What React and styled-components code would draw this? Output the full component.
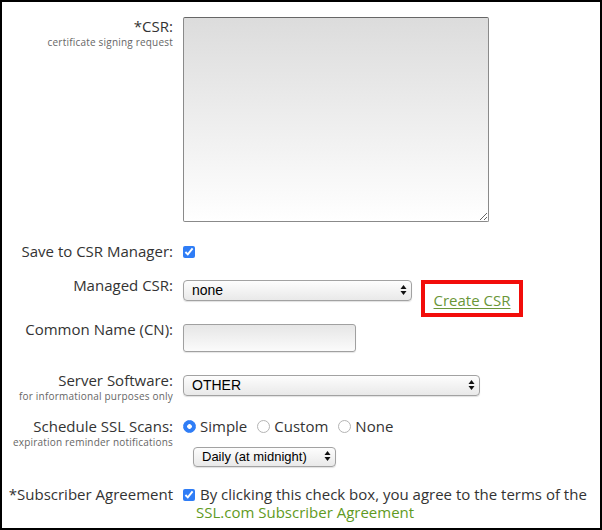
import styled, {createGlobalStyle} from 'styled-components';

const GlobalStyle = createGlobalStyle`
	body {
		margin: 0;
		background: #fff;
	}
`;

const Frame = styled.form`
	box-sizing: border-box;
	width: 602px;
	height: 530px;
	border: 2px solid #000;
	padding-top: 15px;
	font-family: "Open Sans", "DejaVu Sans", sans-serif;
	font-size: 15px;
	color: #333;
`;

const Row = styled.div`
	display: grid;
	grid-template-columns: 171px 1fr;
	column-gap: 10px;
	align-items: start;
	margin-top: ${p => p.$gap || 0}px;
`;

const Label = styled.label`
	display: flex;
	flex-direction: column;
	align-items: flex-end;
	text-align: right;
	line-height: 19px;
	white-space: nowrap;
`;

const Hint = styled.small`
	font-size: 10px;
	line-height: 12px;
	color: #666;
	letter-spacing: 0.2px;
`;

const Controls = styled.div`
	display: flex;
	align-items: flex-start;
	gap: ${p => p.$gap || 0}px;
`;

const Stack = styled.div`
	display: flex;
	flex-direction: column;
`;

const TextArea = styled.textarea`
	display: block;
	box-sizing: border-box;
	width: 306px;
	height: 205px;
	border: 1px solid #8a8a8a;
	border-top-color: #666;
	border-radius: 2px;
	background: linear-gradient(#dcdcdc, #fff);
`;

const Check = styled.input.attrs({type: 'checkbox'})`
	width: 12px;
	height: 12px;
	margin: ${p => p.$top || 0}px 0 0 0;
	accent-color: #2f7df6;
	flex-shrink: 0;
`;

const SelectWrap = styled.div`
	position: relative;
	width: ${p => p.$width}px;
	margin-top: ${p => p.$top || 0}px;
	margin-left: ${p => p.$left || 0}px;
`;

const Select = styled.select`
	appearance: none;
	box-sizing: border-box;
	width: 100%;
	height: ${p => p.$height || 21}px;
	padding: 0 20px 0 8px;
	border: 1px solid #a2a2a2;
	border-radius: 4px;
	background: linear-gradient(#fdfdfd, #e9e9e9);
	box-shadow: 0 1px 1px rgba(0, 0, 0, 0.12);
	font-family: "Liberation Sans", Arial, sans-serif;
	font-size: ${p => p.$size || 14}px;
	color: #000;
`;

const Arrows = styled.svg`
	position: absolute;
	right: 5px;
	top: 50%;
	transform: translateY(-50%);
	pointer-events: none;
`;

const TextInput = styled.input`
	box-sizing: border-box;
	width: 173px;
	height: 28px;
	margin-top: 4px;
	border: 1px solid #a0a0a0;
	border-radius: 3px;
	background: linear-gradient(#e6e6e6, #fbfbfb);
	box-shadow: 0 1px 1px rgba(0, 0, 0, 0.1);
`;

const Highlight = styled.div`
	box-sizing: border-box;
	width: 102px;
	height: 37px;
	margin-top: 4px;
	border: 4px solid #f20d0a;
	display: flex;
	align-items: center;
	justify-content: center;
	padding-top: 3px;
`;

const Link = styled.a`
	color: ${p => p.$dark ? '#6a9638' : '#5f9a23'};
	text-decoration: ${p => p.$underline ? 'underline' : 'none'};
	text-underline-offset: 2px;
	cursor: pointer;
`;

const RadioRow = styled.div`
	display: flex;
	align-items: center;
	height: 19px;
	gap: 10px;
`;

const RadioLabel = styled.label`
	display: flex;
	align-items: center;
	gap: 4px;
	line-height: 19px;
`;

const Radio = styled.input.attrs({type: 'radio'})`
	appearance: none;
	width: 13px;
	height: 13px;
	margin: 0;
	border-radius: 50%;
	border: 1px solid #b4b4b4;
	background: #fff;
	box-sizing: border-box;

	&:checked {
		border-color: #2f7df6;
		background: radial-gradient(circle, #fff 0 2px, #2f7df6 2.6px);
	}
`;

const Agreement = styled.span`
	margin-left: 1px;
	line-height: 18px;
	text-indent: 4px;
	white-space: nowrap;
`;

const SelectArrows = () => (
	<Arrows width='7' height='11' viewBox='0 0 7 11'>
		<path d='M3.5 0.5 L6.5 4.5 L0.5 4.5 Z' fill='#111' />
		<path d='M3.5 10.5 L6.5 6.5 L0.5 6.5 Z' fill='#111' />
	</Arrows>
);

const App = () => {
	return (
		<>
			<GlobalStyle />
			<Frame onSubmit={e => e.preventDefault()}>
				<Row>
					<Label>
						*CSR:
						<Hint>certificate signing request</Hint>
					</Label>
					<TextArea />
				</Row>

				<Row $gap={20}>
					<Label>Save to CSR Manager:</Label>
					<Controls>
						<Check $top={4} defaultChecked />
					</Controls>
				</Row>

				<Row $gap={15}>
					<Label>Managed CSR:</Label>
					<Controls $gap={9}>
						<SelectWrap $width={229} $top={3}>
							<Select defaultValue='none'>
								<option value='none'>none</option>
							</Select>
							<SelectArrows />
						</SelectWrap>
						<Highlight>
							<Link $dark $underline>Create CSR</Link>
						</Highlight>
					</Controls>
				</Row>

				<Row $gap={3}>
					<Label>Common Name (CN):</Label>
					<TextInput type='text' />
				</Row>

				<Row $gap={19}>
					<Label>
						Server Software:
						<Hint>for informational purposes only</Hint>
					</Label>
					<SelectWrap $width={297} $top={3}>
						<Select defaultValue='other'>
							<option value='other'>OTHER</option>
						</Select>
						<SelectArrows />
					</SelectWrap>
				</Row>

				<Row $gap={15}>
					<Label>
						Schedule SSL Scans:
						<Hint>expiration reminder notifications</Hint>
					</Label>
					<Stack>
						<RadioRow>
							<RadioLabel><Radio name='scan' defaultChecked />Simple</RadioLabel>
							<RadioLabel><Radio name='scan' />Custom</RadioLabel>
							<RadioLabel><Radio name='scan' />None</RadioLabel>
						</RadioRow>
						<SelectWrap $width={143} $top={9} $left={10}>
							<Select $height={20} $size={13} defaultValue='daily'>
								<option value='daily'>Daily (at midnight)</option>
							</Select>
							<SelectArrows />
						</SelectWrap>
					</Stack>
				</Row>

				<Row $gap={18}>
					<Label>*Subscriber Agreement</Label>
					<Controls>
						<Check $top={4} defaultChecked />
						<Agreement>
							By clicking this check box, you agree to the terms of the
							<br />
							<Link>SSL.com Subscriber Agreement</Link>
						</Agreement>
					</Controls>
				</Row>
			</Frame>
		</>
	);
}

export default App;
